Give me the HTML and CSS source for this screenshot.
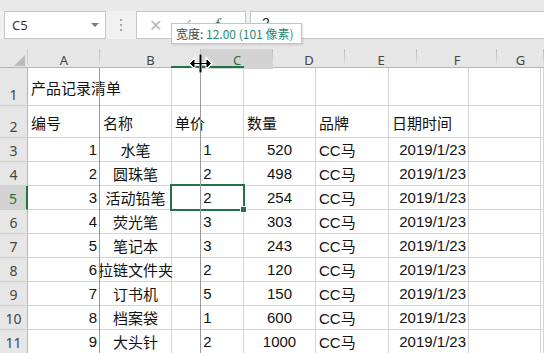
FILE: index.html
```html
<!DOCTYPE html>
<html>
<head>
    <title>产品记录清单</title>
    <link rel="stylesheet" href="styles.css">
</head>
<body>
    <div class="app">
        <div class="topstrip"></div>

        <div class="fbar">
            <div class="namebox">
                <span>C5</span>
                <svg class="caret" width="8" height="4" viewBox="0 0 8 4"><polygon points="0,0 8,0 4,4" fill="#7a7a7a"/></svg>
            </div>
            <div class="grip"><i></i><i></i><i></i></div>
            <div class="fxbox">
                <span class="fx-x">✕</span>
                <span class="fx-ok">✓</span>
                <span class="fx-f">f</span>
            </div>
            <div class="finput">2</div>
        </div>

        <div class="band"></div>

        <div class="sheet">
            <div class="hdr">
                <div class="corner">
                    <svg width="11" height="11" viewBox="0 0 11 11"><polygon points="11,0 11,11 0,11" fill="#b9b9b9"/></svg>
                </div>
                <div class="ch">A</div>
                <div class="ch">B</div>
                <div class="ch ch-on">C</div>
                <div class="ch">D</div>
                <div class="ch">E</div>
                <div class="ch">F</div>
                <div class="ch">G</div>
                <span class="hdr-mark"></span>
            </div>

            <div class="row r-title">
                <div class="rh">1</div>
                <div class="c l">产品记录清单</div>
                <div class="c"></div><div class="c"></div><div class="c"></div>
                <div class="c"></div><div class="c"></div><div class="c"></div><div class="c"></div>
            </div>
            <div class="row r-head">
                <div class="rh">2</div>
                <div class="c l">编号</div>
                <div class="c l">名称</div>
                <div class="c l">单价</div>
                <div class="c l">数量</div>
                <div class="c l">品牌</div>
                <div class="c l">日期时间</div>
                <div class="c"></div><div class="c"></div>
            </div>

            <div class="row"><div class="rh">3</div><div class="c r">1</div><div class="c m">水笔</div><div class="c m">1</div><div class="c m">520</div><div class="c l">CC马</div><div class="c r">2019/1/23</div><div class="c"></div><div class="c"></div></div>
            <div class="row"><div class="rh">4</div><div class="c r">2</div><div class="c m">圆珠笔</div><div class="c m">2</div><div class="c m">498</div><div class="c l">CC马</div><div class="c r">2019/1/23</div><div class="c"></div><div class="c"></div></div>
            <div class="row"><div class="rh rh-on">5</div><div class="c r">3</div><div class="c m">活动铅笔</div><div class="c m sel">2</div><div class="c m">254</div><div class="c l">CC马</div><div class="c r">2019/1/23</div><div class="c"></div><div class="c"></div></div>
            <div class="row"><div class="rh">6</div><div class="c r">4</div><div class="c m">荧光笔</div><div class="c m">3</div><div class="c m">303</div><div class="c l">CC马</div><div class="c r">2019/1/23</div><div class="c"></div><div class="c"></div></div>
            <div class="row"><div class="rh">7</div><div class="c r">5</div><div class="c m">笔记本</div><div class="c m">3</div><div class="c m">243</div><div class="c l">CC马</div><div class="c r">2019/1/23</div><div class="c"></div><div class="c"></div></div>
            <div class="row"><div class="rh">8</div><div class="c r">6</div><div class="c m">拉链文件夹</div><div class="c m">2</div><div class="c m">120</div><div class="c l">CC马</div><div class="c r">2019/1/23</div><div class="c"></div><div class="c"></div></div>
            <div class="row"><div class="rh">9</div><div class="c r">7</div><div class="c m">订书机</div><div class="c m">5</div><div class="c m">150</div><div class="c l">CC马</div><div class="c r">2019/1/23</div><div class="c"></div><div class="c"></div></div>
            <div class="row"><div class="rh">10</div><div class="c r">8</div><div class="c m">档案袋</div><div class="c m">1</div><div class="c m">600</div><div class="c l">CC马</div><div class="c r">2019/1/23</div><div class="c"></div><div class="c"></div></div>
            <div class="row"><div class="rh">11</div><div class="c r">9</div><div class="c m">大头针</div><div class="c m">2</div><div class="c m">1000</div><div class="c l">CC马</div><div class="c r">2019/1/23</div><div class="c"></div><div class="c"></div></div>

            <!-- column resize guides -->
            <span class="guide guide-a"></span>
            <span class="guide guide-b"></span>
        </div>

        <div class="tip">宽度: <span class="tip-val">12.00 (101 像素)</span></div>

        <svg class="cursor" width="24" height="22" viewBox="0 0 24 22">
            <g stroke="#fff" stroke-width="3" fill="#fff">
                <line x1="11.5" y1="1" x2="11.5" y2="20"/>
                <line x1="3" y1="10.5" x2="20" y2="10.5"/>
                <polygon points="1,10.5 5,6.5 5,14.5"/>
                <polygon points="22,10.5 18,6.5 18,14.5"/>
            </g>
            <g stroke="#000" stroke-width="1" fill="#000">
                <line x1="11.5" y1="1.5" x2="11.5" y2="19.5" stroke-width="2"/>
                <line x1="3" y1="10.5" x2="20" y2="10.5"/>
                <polygon points="1.5,10.5 5,7 5,14"/>
                <polygon points="21.5,10.5 18,7 18,14"/>
            </g>
        </svg>
    </div>
</body>
</html>
```

FILE: styles.css
```css
body {
    margin: 0;
    background-color: #ffffff;
    font-family: "Liberation Sans", "Noto Sans CJK SC", sans-serif;
    overflow: hidden;
}

.app {
    position: relative;
    width: 544px;
    height: 353px;
    background-color: #e6e6e6;
}

.topstrip {
    height: 11px;
    background-color: #e9e9e9;
}

/* formula bar */
.fbar {
    display: flex;
    height: 28px;
    background-color: #f0f0f0;
}

.namebox,
.fxbox,
.finput {
    box-sizing: border-box;
    height: 28px;
    background-color: #ffffff;
    border: 1px solid #c6c6c6;
}

.namebox {
    display: flex;
    align-items: center;
    justify-content: space-between;
    width: 102px;
    margin-left: 4px;
    padding: 0 6px 0 7px;
    font-family: "Noto Sans", sans-serif;
    font-size: 13px;
    color: #333;
}

.grip {
    display: flex;
    flex-direction: column;
    justify-content: center;
    gap: 3px;
    width: 30px;
    align-items: center;
}

.grip i {
    width: 2px;
    height: 2px;
    background-color: #a6a6a6;
}

.fxbox {
    display: flex;
    align-items: center;
    width: 110px;
    padding-left: 12px;
    font-size: 16px;
    color: #b5b5b5;
}

.fx-ok {
    margin-left: 18px;
}

.fx-f {
    margin-left: 24px;
    font-family: "Liberation Serif", serif;
    font-style: italic;
    color: #555;
}

.finput {
    flex: 1;
    margin-left: 4px;
    border-right: none;
    padding: 3px 0 0 11px;
    font-size: 14px;
    color: #222;
}

.band {
    height: 10px;
    background-color: #e6e6e6;
}

/* grid */
.sheet {
    position: relative;
    background-color: #ffffff;
}

.hdr {
    position: relative;
    display: grid;
    grid-template-columns: 28px 72px 101px 72px 72px 72px 80px 47px;
    height: 18px;
    background-color: #e6e6e6;
    border-bottom: 1px solid #b4b4b4;
    font-family: "Noto Sans", sans-serif;
    font-size: 13px;
    color: #444;
}

.corner {
    display: flex;
    align-items: flex-end;
    justify-content: flex-end;
    padding: 0 3px 3px 0;
    background: linear-gradient(#c4c4c4, #d4d4d4) no-repeat right top / 1px 16px;
}

.ch {
    display: flex;
    align-items: center;
    justify-content: center;
    padding-top: 2px;
    background: linear-gradient(#bdbdbd, #dadada) no-repeat right top / 1px 16px;
}

.ch-on {
    background-color: #d3d3d3;
    color: #217346;
}

.hdr-mark {
    position: absolute;
    left: 171px;
    bottom: -1px;
    width: 73px;
    height: 2px;
    background-color: #217346;
}

.row {
    display: grid;
    grid-template-columns: 28px 72px 72px 72px 72px 73px 80px 72px 3px;
    height: 24px;
    font-size: 15px;
    color: #111;
}

.r-title {
    height: 38px;
}

.r-head {
    height: 32px;
}

.rh {
    box-sizing: border-box;
    display: flex;
    align-items: flex-end;
    justify-content: center;
    padding-bottom: 1px;
    background-color: #e6e6e6;
    border-right: 1px solid #b4b4b4;
    border-bottom: 1px solid #d0d0d0;
    font-family: "Noto Sans", sans-serif;
    font-size: 14px;
    color: #444;
}

.rh-on {
    background-color: #d3d3d3;
    color: #217346;
    border-right: 2px solid #217346;
}

.c {
    box-sizing: border-box;
    display: flex;
    align-items: center;
    white-space: nowrap;
    border-right: 1px solid #d4d4d4;
    border-bottom: 1px solid #d4d4d4;
}

.l {
    justify-content: flex-start;
    padding-left: 3px;
}

.r {
    justify-content: flex-end;
    padding-right: 2px;
}

.m {
    justify-content: center;
}

.r-title .c,
.r-head .c {
    padding-top: 2px;
}

.sel {
    position: relative;
}

.sel::after {
    content: "";
    position: absolute;
    top: -2px;
    left: -2px;
    right: -2px;
    bottom: -2px;
    border: 2px solid #217346;
}

.sel::before {
    content: "";
    position: absolute;
    right: -4px;
    bottom: -4px;
    width: 5px;
    height: 5px;
    background-color: #217346;
    border: 1px solid #ffffff;
    z-index: 1;
}

.guide {
    position: absolute;
    top: 19px;
    bottom: 0;
    width: 1px;
    background-color: #9b9b9b;
}

.guide-a {
    left: 99px;
}

.guide-b {
    left: 200px;
}

/* resize tooltip */
.tip {
    position: absolute;
    left: 171px;
    top: 23px;
    box-sizing: border-box;
    width: 131px;
    height: 21px;
    padding: 2px 0 0 4px;
    background-color: #ffffff;
    border: 1px solid #c4c4c4;
    box-shadow: 1px 1px 2px rgba(0, 0, 0, 0.12);
    font-family: "Noto Sans CJK SC", sans-serif;
    font-size: 12px;
    line-height: 15px;
    color: #444;
    white-space: nowrap;
}

.tip-val {
    color: #2a8a72;
}

.cursor {
    position: absolute;
    left: 189px;
    top: 53px;
}
```
